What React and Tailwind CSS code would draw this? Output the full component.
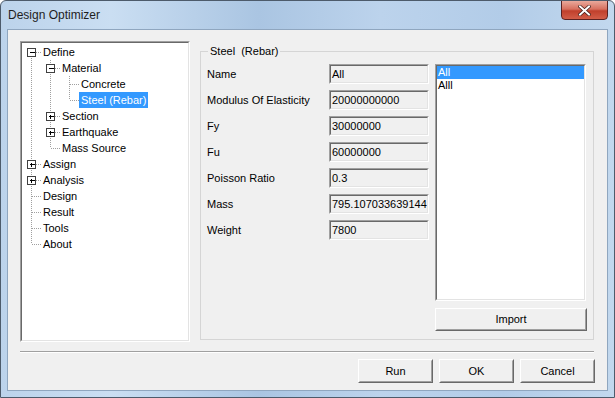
import React from 'react';

const treeRows = [
  { label: 'Define', level: 0, box: '-', anc: [], first: true },
  { label: 'Material', level: 1, box: '-', anc: [true] },
  { label: 'Concrete', level: 2, anc: [true, true] },
  { label: 'Steel (Rebar)', level: 2, anc: [true, true], last: true, selected: true },
  { label: 'Section', level: 1, box: '+', anc: [true] },
  { label: 'Earthquake', level: 1, box: '+', anc: [true] },
  { label: 'Mass Source', level: 1, anc: [true], last: true },
  { label: 'Assign', level: 0, box: '+', anc: [] },
  { label: 'Analysis', level: 0, box: '+', anc: [] },
  { label: 'Design', level: 0, anc: [] },
  { label: 'Result', level: 0, anc: [] },
  { label: 'Tools', level: 0, anc: [] },
  { label: 'About', level: 0, anc: [], last: true },
];

const fields = [
  { label: 'Name', value: 'All' },
  { label: 'Modulus Of Elasticity', value: '20000000000' },
  { label: 'Fy', value: '30000000' },
  { label: 'Fu', value: '60000000' },
  { label: 'Poisson Ratio', value: '0.3' },
  { label: 'Mass', value: '795.107033639144' },
  { label: 'Weight', value: '7800' },
];

// dotted connector lines + expand box for one tree row
function TreeLines({ row }) {
  const w = (row.level + 1) * 19;
  const cx = row.level * 19 + 9.5;
  return (
    <svg width={w} height="16" className="shrink-0" shapeRendering="crispEdges">
      {row.anc.map((on, i) =>
        on ? (
          <line key={i} x1={i * 19 + 9.5} y1="0" x2={i * 19 + 9.5} y2="16" stroke="#a0a0a0" strokeDasharray="1 1" />
        ) : null
      )}
      <line x1={cx} y1={row.first ? 8 : 0} x2={cx} y2={row.last ? 8 : 16} stroke="#a0a0a0" strokeDasharray="1 1" />
      <line x1={cx} y1="8.5" x2={w} y2="8.5" stroke="#a0a0a0" strokeDasharray="1 1" />
      {row.box && (
        <g>
          <rect x={cx - 4} y="4.5" width="8" height="8" fill="#fff" stroke="#404040" />
          <line x1={cx - 2} y1="8.5" x2={cx + 3} y2="8.5" stroke="#000" />
          {row.box === '+' && <line x1={cx} y1="6.5" x2={cx} y2="11" stroke="#000" />}
        </g>
      )}
    </svg>
  );
}

function Sunken({ className = '', children }) {
  return (
    <div className={`border border-t-[#a0a0a0] border-l-[#a0a0a0] border-b-white border-r-white ${className}`}>
      <div className="h-full border border-t-[#696969] border-l-[#696969] border-b-[#e3e3e3] border-r-[#e3e3e3]">
        {children}
      </div>
    </div>
  );
}

function Button({ children, className = '' }) {
  return (
    <button className={`border border-t-white border-l-white border-b-[#696969] border-r-[#696969] bg-[#f0f0f0] ${className}`}>
      <div className="h-full flex items-center justify-center border border-t-[#f0f0f0] border-l-[#f0f0f0] border-b-[#a0a0a0] border-r-[#a0a0a0]">
        {children}
      </div>
    </button>
  );
}

export default function App() {
  return (
    <div
      className="w-[615px] h-[398px] relative overflow-hidden rounded-t-[6px] border border-[#4d5b6b] bg-[linear-gradient(90deg,#bcd3eb_0%,#cadef2_18%,#aac5e2_42%,#bcd3ec_62%,#b2cce8_82%,#c2d8ee_100%)] text-black"
      style={{ fontFamily: '"Liberation Sans", Arial, sans-serif' }}
    >
      {/* title bar */}
      <div className="h-[28px] flex items-center pl-[7px] text-[12px] text-[#1e1e1e]">Design Optimizer</div>

      {/* close button */}
      <div className="absolute top-[-1px] left-[560px] w-[47px] h-[20px] rounded-b-[4px] border border-[#5a2222] bg-[linear-gradient(180deg,#e9a99c_0%,#d7705f_45%,#c0402c_55%,#d25d48_100%)] flex items-center justify-center">
        <svg width="13" height="11" viewBox="0 0 13 11">
          <path d="M2 1.5 L11 9.5 M11 1.5 L2 9.5" stroke="#3b1a16" strokeWidth="3.4" strokeLinecap="square" />
          <path d="M2 1.5 L11 9.5 M11 1.5 L2 9.5" stroke="#fff" strokeWidth="2" strokeLinecap="square" />
        </svg>
      </div>

      {/* client area */}
      <div className="mx-[6px] h-[362px] border border-[#8fa6bf] bg-[#f0f0f0] text-[11px] flex flex-col pt-[11px] px-[12px]">
        <div className="flex h-[301px]">
          {/* tree */}
          <Sunken className="w-[170px] h-[301px] shrink-0">
            <div className="h-full bg-white pt-[1px]">
              {treeRows.map((row) => (
                <div key={row.label} className="flex h-[16px] items-center">
                  <TreeLines row={row} />
                  <span
                    className={`px-[2px] h-[16px] leading-[16px] whitespace-nowrap ${
                      row.selected ? 'bg-[#3399ff] text-white' : ''
                    }`}
                  >
                    {row.label}
                  </span>
                </div>
              ))}
            </div>
          </Sunken>

          {/* group box */}
          <div className="relative ml-[10px] mt-[10px] w-[394px] h-[289px] border border-[#d5d5d5] pl-[6px] pt-[12px] flex">
            <span className="absolute left-[7px] top-[-8px] px-[2px] bg-[#f0f0f0] leading-[14px]">Steel&nbsp; (Rebar)</span>
            <div className="flex flex-col gap-[6px]">
              {fields.map((f) => (
                <div key={f.label} className="flex items-center h-[20px]">
                  <span className="w-[122px]">{f.label}</span>
                  <Sunken className="w-[100px] h-[20px]">
                    <div className="h-full bg-[#f0f0f0] pl-[1px] leading-[16px] whitespace-nowrap overflow-hidden">{f.value}</div>
                  </Sunken>
                </div>
              ))}
            </div>
            <div className="ml-[6px] flex flex-col">
              <Sunken className="w-[151px] h-[237px]">
                <div className="h-full bg-white">
                  <div className="h-[13px] leading-[13px] bg-[#3399ff] text-white pl-[1px]">All</div>
                  <div className="h-[13px] leading-[13px] pl-[1px]">Alll</div>
                </div>
              </Sunken>
              <Button className="mt-[7px] w-[152px] h-[23px]">Import</Button>
            </div>
          </div>
        </div>

        {/* separator */}
        <div className="mt-[9px] w-[574px] border-t border-t-[#a0a0a0] border-b border-b-white" />

        {/* bottom buttons */}
        <div className="mt-[6px] flex gap-[6px] pl-[338px]">
          <Button className="w-[75px] h-[24px]">Run</Button>
          <Button className="w-[75px] h-[24px]">OK</Button>
          <Button className="w-[75px] h-[24px]">Cancel</Button>
        </div>
      </div>
    </div>
  );
}
